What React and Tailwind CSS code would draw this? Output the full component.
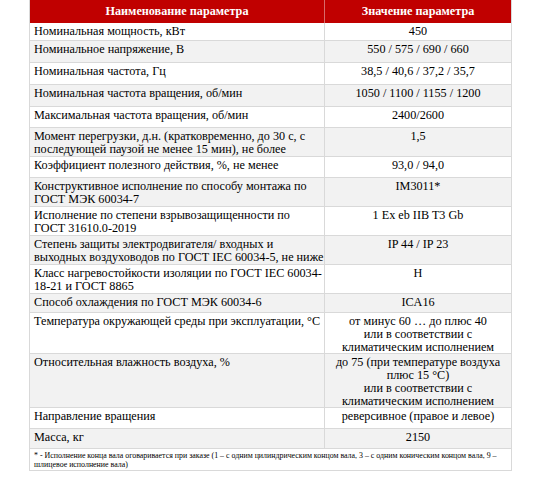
const rows = [
  { h: "h-[18px]", bg: "bg-white", label: ["Номинальная мощность, кВт"], value: ["450"] },
  { h: "h-[22px]", bg: "bg-[#f2f2f2]", label: ["Номинальное напряжение, В"], value: ["550 / 575 / 690 / 660"] },
  { h: "h-[22px]", bg: "bg-white", label: ["Номинальная частота, Гц"], value: ["38,5 / 40,6 / 37,2 / 35,7"] },
  { h: "h-[22px]", bg: "bg-[#f2f2f2]", label: ["Номинальная частота вращения, об/мин"], value: ["1050 / 1100 / 1155 / 1200"] },
  { h: "h-[21px]", bg: "bg-white", label: ["Максимальная частота вращения, об/мин"], value: ["2400/2600"] },
  {
    h: "h-[29px]",
    bg: "bg-[#f2f2f2]",
    label: ["Момент перегрузки, д.н. (кратковременно, до 30 с, с", "последующей паузой не менее 15 мин), не более"],
    value: ["1,5"],
  },
  { h: "h-[21px]", bg: "bg-white", label: ["Коэффициент полезного действия, %, не менее"], value: ["93,0 / 94,0"] },
  {
    h: "h-[29px]",
    bg: "bg-[#f2f2f2]",
    label: ["Конструктивное исполнение по способу монтажа по", "ГОСТ МЭК 60034-7"],
    value: ["IM3011*"],
  },
  {
    h: "h-[29px]",
    bg: "bg-white",
    label: ["Исполнение по степени взрывозащищенности по", "ГОСТ 31610.0-2019"],
    value: ["1 Ex eb IIB T3 Gb"],
  },
  {
    h: "h-[29px]",
    bg: "bg-[#f2f2f2]",
    label: ["Степень защиты электродвигателя/ входных и", "выходных воздуховодов по ГОСТ IEC 60034-5, не ниже"],
    value: ["IP 44 / IP 23"],
  },
  {
    h: "h-[29px]",
    bg: "bg-white",
    label: ["Класс нагревостойкости изоляции по ГОСТ IEC 60034-", "18-21 и ГОСТ 8865"],
    value: ["H"],
  },
  { h: "h-[19px]", bg: "bg-[#f2f2f2]", label: ["Способ охлаждения по ГОСТ МЭК 60034-6"], value: ["ICA16"] },
  {
    h: "h-[41px]",
    bg: "bg-white",
    label: ["Температура окружающей среды при эксплуатации, °C"],
    value: ["от минус 60 … до плюс 40", "или в соответствии с", "климатическим исполнением"],
  },
  {
    h: "h-[54px]",
    bg: "bg-[#f2f2f2]",
    label: ["Относительная влажность воздуха, %"],
    value: ["до 75 (при температуре воздуха", "плюс 15 °C)", "или в соответствии с", "климатическим исполнением"],
  },
  { h: "h-[21px]", bg: "bg-white", label: ["Направление вращения"], value: ["реверсивное (правое и левое)"] },
  { h: "h-[20px]", bg: "bg-[#f2f2f2]", label: ["Масса, кг"], value: ["2150"] },
];

function Lines({ items }) {
  return items.map((t, i) => (
    <span key={i} className="block whitespace-nowrap">
      {t}
    </span>
  ));
}

export default function App() {
  return (
    <div className="w-[540px] h-[480px] bg-white text-black overflow-hidden font-['Liberation_Serif','Times_New_Roman',serif]">
      <div className="ml-[29px] w-[483px] border-x border-[#d9d9d9] text-[12.2px] leading-[13px]">
        {/* Header */}
        <div className="flex h-[23px] bg-[#c00000] text-white font-bold">
          <div className="w-[295px] shrink-0 border-r border-[#d86a6a] flex items-center justify-center">
            Наименование параметра
          </div>
          <div className="flex-1 flex items-center justify-center">Значение параметра</div>
        </div>

        {rows.map((r, i) => (
          <div key={i} className={`flex border-b border-[#d9d9d9] ${r.h} ${r.bg}`}>
            <div className="w-[295px] shrink-0 border-r border-[#d9d9d9] pl-[4px] pt-[2px]">
              <Lines items={r.label} />
            </div>
            <div className="flex-1 text-center pt-[2px]">
              <Lines items={r.value} />
            </div>
          </div>
        ))}

        {/* Footnote */}
        <div className="h-[22px] border-b border-[#d9d9d9] pl-[4px] pt-[2px] text-[7.9px] leading-[9px] bg-white">
          <span className="block whitespace-nowrap">
            * - Исполнение конца вала оговаривается при заказе (1 – с одним цилиндрическим концом вала, 3 – с одним
            коническим концом вала, 9 –
          </span>
          <span className="block">шлицевое исполнение вала)</span>
        </div>
      </div>
    </div>
  );
}
